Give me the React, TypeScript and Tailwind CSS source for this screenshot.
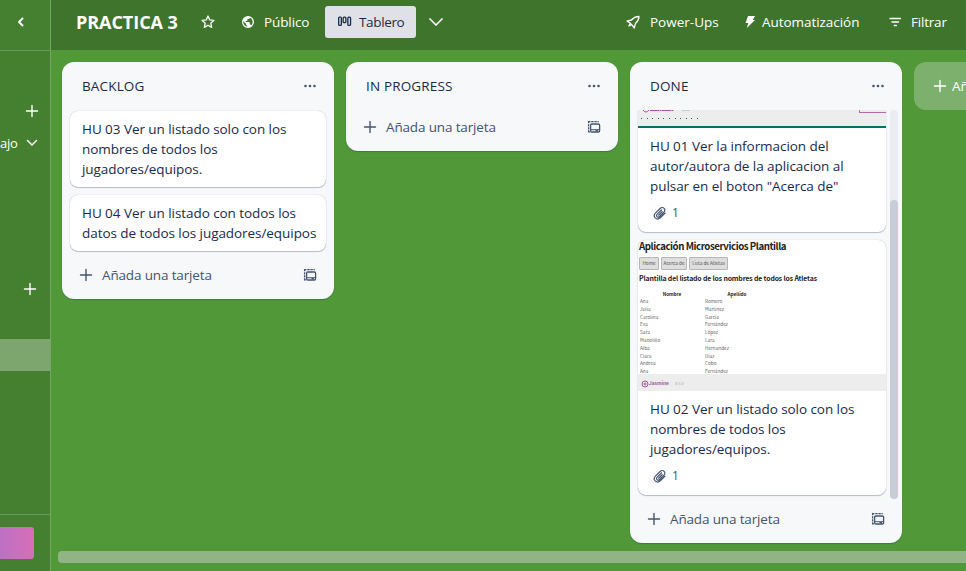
import React from 'react';

type IconProps = { className?: string };

const Plus = ({ className = '' }: IconProps) => (
  <svg width="16" height="16" viewBox="0 0 16 16" className={`shrink-0 ${className}`} fill="none" stroke="currentColor" strokeWidth="1.4" strokeLinecap="round">
    <path d="M8 2.5v11M2.5 8h11" />
  </svg>
);

const Chevron = ({ className = '' }: IconProps) => (
  <svg width="16" height="16" viewBox="0 0 16 16" className={`shrink-0 ${className}`} fill="none" stroke="currentColor" strokeWidth="1.7" strokeLinecap="round" strokeLinejoin="round">
    <path d="M2 5l6 6 6-6" />
  </svg>
);

const Star = () => (
  <svg width="16" height="16" viewBox="0 0 16 16" className="shrink-0" fill="none" stroke="currentColor" strokeWidth="1.3" strokeLinejoin="round">
    <path d="M8 2l1.75 3.9 4.25.45-3.2 2.85.9 4.2L8 11.2l-3.7 2.2.9-4.2L2 6.35l4.25-.45z" />
  </svg>
);

const Globe = () => (
  <svg width="16" height="16" viewBox="0 0 16 16" className="shrink-0" fill="currentColor">
    <path fillRule="evenodd" d="M8 2a6 6 0 1 0 0 12A6 6 0 0 0 8 2zM7.300 12.750A4.800 4.800 0 0 1 3.300 7.100L6.100 9.900v.6c0 .7.5 1.200 1.200 1.200zM11.500 11.200c-.2-.5-.6-.8-1.200-.8h-.5V8.700c0-.4-.3-.6-.6-.6H5.700V6.900h1.100c.4 0 .6-.3.600-.6V5.100h1.200c.6 0 1.100-.5 1.100-1.100v-.4a4.800 4.800 0 0 1 1.800 7.600z" />
  </svg>
);

const BoardIcon = () => (
  <svg width="16" height="16" viewBox="0 0 16 16" className="shrink-0" fill="none" stroke="currentColor" strokeWidth="1.3">
    <rect x="1.650" y="3.150" width="2.700" height="8.200" rx="0.9" />
    <rect x="6.150" y="3.150" width="2.700" height="5.500" rx="0.9" />
    <rect x="10.850" y="3.150" width="2.700" height="8.200" rx="0.9" />
  </svg>
);

const Rocket = () => (
  <svg width="16" height="16" viewBox="0 0 16 16" className="shrink-0" fill="none" stroke="currentColor" strokeWidth="1.3" strokeLinejoin="round" strokeLinecap="round">
    <path d="M14 2.300C10.500 2.500 8.500 3.600 6.400 6L2 7.100l2.800 1.700 2.800 2.800L9.300 14l1-4.200C12.700 7.700 13.800 5.700 14 2.300z" />
    <path d="M4.800 10.100L3.900 12l2-.9" />
  </svg>
);

const Bolt = () => (
  <svg width="16" height="16" viewBox="0 0 16 16" className="shrink-0" fill="currentColor">
    <path d="M6 2h7l-2.200 4H13L4.800 14l1.500-5H3.500z" />
  </svg>
);

const FilterIcon = () => (
  <svg width="16" height="16" viewBox="0 0 16 16" className="shrink-0" fill="none" stroke="currentColor" strokeWidth="1.4" strokeLinecap="round">
    <path d="M3 4.500h10.500M5 8h6.500M7.300 11.500h2" />
  </svg>
);

const Dots = () => (
  <svg width="16" height="16" viewBox="0 0 16 16" className="shrink-0 text-[#44546f]" fill="currentColor">
    <circle cx="3.500" cy="8" r="1.300" />
    <circle cx="8" cy="8" r="1.300" />
    <circle cx="12.500" cy="8" r="1.300" />
  </svg>
);

const TemplateIcon = () => (
  <svg width="16" height="16" viewBox="0 0 16 16" className="shrink-0 text-[#44546f]" fill="none" stroke="currentColor" strokeWidth="1.300">
    <rect x="4.600" y="5" width="9" height="8" rx="1.200" />
    <path d="M5 10.700h8.500" strokeWidth="1" />
    <path d="M9.500 11.700h2.500" strokeWidth="1.300" />
    <path d="M2.600 4.300V2.700h1.800M5.200 2.700h2.400M8.400 2.700h2.400M11.500 2.700h1.300" />
    <path d="M2.600 5.200v2.300M2.600 8.300v2.300M2.600 11.300v1.500h1.300" />
  </svg>
);

const Clip = () => (
  <svg width="16" height="16" viewBox="0 0 16 16" className="shrink-0 text-[#44546f]" fill="none" stroke="currentColor" strokeWidth="1.200" strokeLinecap="round" strokeLinejoin="round">
    <path d="M12.900 8.200l-4.700 4.600c-1.500 1.400-3.700 1.400-5 .1-1.300-1.400-1.200-3.300.2-4.700l4.700-4.700c1.200-1.200 3-1.200 4-.2 1.100 1.100 1 2.700-.1 3.800L7.600 11.500c-.8.800-1.900.8-2.600.200-.7-.8-.6-1.700.2-2.500l4.300-4.200" />
    <path d="M6.600 10.200l3.600-3.500" />
  </svg>
);

const List = ({ title, children }: { title: string; children?: React.ReactNode }) => (
  <section className="flex w-[272px] shrink-0 flex-col rounded-xl bg-[#f7f8fa] pb-2 shadow-[0_1px_1px_#091e4240]">
    <header className="flex h-12 items-center justify-between pl-5 pr-4">
      <h2 className="pt-0.5 text-[13.5px] font-medium tracking-[0.15px]">{title}</h2>
      <Dots />
    </header>
    {children}
    <footer className="flex h-8 items-center px-4 text-[#44546f]">
      <Plus />
      <span className="ml-2 flex-1 pt-0.5 text-[13.5px] tracking-[-0.15px]">Añada una tarjeta</span>
      <TemplateIcon />
    </footer>
  </section>
);

const Card = ({ lines, cover, attachments }: { lines: string[]; cover?: React.ReactNode; attachments?: number }) => (
  <article className="shrink-0 overflow-hidden rounded-lg bg-white shadow-[0_1px_1px_#091e4240,0_0_1px_#091e424f]">
    {cover}
    <div className={attachments ? 'px-3 pb-1 pt-2' : 'px-3 py-2'}>
      {lines.map((line) => (
        <p key={line} className="h-5 whitespace-nowrap text-[13.5px] leading-5 tracking-[-0.06px]">{line}</p>
      ))}
      {attachments && (
        <div className="mt-1 flex h-7 items-center gap-1 pb-[3px] pl-0.5 text-xs text-[#44546f]">
          <Clip />
          <span>{attachments}</span>
        </div>
      )}
    </div>
  </article>
);

const Jasmine = () => (
  <div className="flex h-[17px] items-center bg-[#ededed] pl-[3px] pt-0.5 text-[4.800px] font-bold text-[#a0569a]">
    <svg width="8" height="8" viewBox="0 0 8 8" fill="none" stroke="currentColor">
      <circle cx="4" cy="4" r="3" />
      <circle cx="4" cy="4" r="1" />
    </svg>
    <span>Jasmine</span>
    <span className="ml-1.5 text-[4px] font-normal text-[#aaa]">4.5.0</span>
  </div>
);

const ReportCover = () => (
  <div className="flex h-[18px] flex-col justify-between border-b-2 border-[#007069] bg-[#ededed]">
    <div className="flex h-[3px] justify-between overflow-hidden pl-1 text-[#a0569a]">
      <div className="flex">
        <svg width="32" height="3" viewBox="0 0 32 3" fill="none" stroke="currentColor">
          <path d="M1 0q3 4 6 0M8 .5h24" strokeDasharray="9 .5 2 .5" />
        </svg>
        <div className="ml-2 h-px w-2 bg-[#ccc]" />
      </div>
      <div className="h-[3px] w-[27px] border-b border-l border-[#b06aaa]" />
    </div>
    <div className="mb-[7px] flex gap-[4.600px] pl-[3px]">
      {Array.from({ length: 11 }, (_, i) => (
        <i key={i} className="h-px w-px bg-[#007069]" />
      ))}
    </div>
  </div>
);

const athletes = [
  ['Ana', 'Romero'], ['Julia', 'Martinez'], ['Carolina', 'García'], ['Eva', 'Fernández'], ['Sara', 'López'],
  ['Manolillo', 'Lara'], ['Alba', 'Hernandez'], ['Clara', 'Díaz'], ['Andrea', 'Cobo'], ['Ana', 'Fernández'],
];

const AthletesCover = () => (
  <div className="h-[151px] overflow-hidden font-['Noto_Sans_CJK_SC','Noto_Sans',sans-serif] text-[#222]">
    <div className="h-[134px] overflow-hidden pl-px">
      <div className="h-[17px] whitespace-nowrap text-[9.700px] font-bold leading-[13px] tracking-[-0.45px]">Aplicación Microservicios Plantilla</div>
      <div className="flex h-[13px] gap-[2px] whitespace-nowrap text-center text-[4.700px] leading-[11px] text-[#555]">
        <span className="w-5 rounded-[1px] border border-[#b5b5b5] bg-[#dedede]">Home</span>
        <span className="w-[26px] rounded-[1px] border border-[#b5b5b5] bg-[#dedede]">Acerca de</span>
        <span className="w-[39px] rounded-[1px] border border-[#b5b5b5] bg-[#dedede]">Lista de Atletas</span>
      </div>
      <div className="h-5 whitespace-nowrap text-[6.900px] font-bold leading-[17px] tracking-[-0.14px]">Plantilla del listado de los nombres de todos los Atletas</div>
      <div className="grid h-2 grid-cols-[66px_64px] text-center text-[4.700px] font-bold leading-2">
        <span>Nombre</span>
        <span>Apellido</span>
      </div>
      {athletes.map(([name, surname], i) => (
        <div key={i} className="grid h-[7.800px] grid-cols-[65px_64px] pl-px text-[4.700px] leading-[7.800px] text-[#666]">
          <span>{name}</span>
          <span>{surname}</span>
        </div>
      ))}
    </div>
    <Jasmine />
  </div>
);

export default function App() {
  return (
    <div className="flex h-[571px] w-[966px] overflow-hidden bg-[#519839] font-['Open_Sans',sans-serif] text-sm text-[#172b4d]">
      <aside className="flex w-[51px] shrink-0 flex-col border-r border-[#74a664] bg-[#457f30] text-white">
        <div className="flex h-[51px] items-center border-b border-[#6a9859] pb-1.5 pl-3">
          <svg width="16" height="16" viewBox="0 0 16 16" fill="none" stroke="currentColor" strokeWidth="2" strokeLinecap="round" strokeLinejoin="round">
            <path d="M10.500 4.500L7 8l3.500 3.500" />
          </svg>
        </div>
        <div className="mt-[52px] flex h-4 justify-end pr-2.5"><Plus /></div>
        <div className="mt-[14px] flex h-5 items-center justify-between pr-2.5">
          <span className="text-[13px] font-medium tracking-[-0.2px]">ajo</span>
          <svg width="16" height="16" viewBox="0 0 16 16" className="shrink-0" fill="none" stroke="currentColor" strokeWidth="1.500" strokeLinecap="round" strokeLinejoin="round">
            <path d="M3.500 5.500L8 10l4.500-4.500" />
          </svg>
        </div>
        <div className="mt-32 flex h-4 justify-end pr-3"><Plus /></div>
        <div className="mt-[42px] h-8 bg-[#7da66f]" />
        <div className="mt-auto h-[57px] border-t border-[#6a9859] pt-3">
          <div className="h-8 w-[34px] rounded-r-[3px] bg-gradient-to-r from-[#bd70c4] to-[#d76eb8]" />
        </div>
      </aside>

      <main className="flex w-[915px] shrink-0 flex-col">
        <nav className="flex h-[50px] shrink-0 items-center bg-[#3f742c] pb-1.5 pl-[25px] text-[13.5px] font-medium text-white">
          <h1 className="w-[124px] whitespace-nowrap pt-0.5 text-[18px] font-bold tracking-[-0.050px]">PRACTICA 3</h1>
          <Star />
          <div className="ml-6 flex w-[85px] items-center gap-2"><Globe /><span className="pt-0.5 tracking-[-0.1px]">Público</span></div>
          <button className="flex h-8 w-[91px] items-center gap-1.5 rounded-[3px] bg-[#dfe1e6] pl-3 font-normal text-[#172b4d]">
            <BoardIcon />
            <span className="pt-0.5 tracking-[-0.350px]">Tablero</span>
          </button>
          <Chevron className="ml-3" />
          <div className="ml-auto flex w-[117px] items-center gap-[9px]"><Rocket /><span className="pt-0.5">Power-Ups</span></div>
          <div className="flex w-[145px] items-center gap-1"><Bolt /><span className="pt-0.5 tracking-[-0.050px]">Automatización</span></div>
          <div className="flex w-[79px] items-center gap-2"><FilterIcon /><span className="pt-0.5 tracking-[-0.2px]">Filtrar</span></div>
        </nav>

        <div className="flex h-[501px] shrink-0 items-start gap-3 overflow-hidden pl-[11px] pt-3">
          <List title="BACKLOG">
            <div className="flex flex-col gap-2 px-2 pb-2 pt-px">
              <Card lines={['HU 03 Ver un listado solo con los', 'nombres de todos los', 'jugadores/equipos.']} />
              <Card lines={['HU 04 Ver un listado con todos los', 'datos de todos los jugadores/equipos']} />
            </div>
          </List>
          <List title="IN PROGRESS"><div className="h-px" /></List>
          <List title="DONE">
            <div className="mb-1 flex h-[389px] justify-between overflow-hidden pl-2 pr-1">
              <div className="-mt-3 flex w-[248px] flex-col gap-2 pb-1">
                <Card
                  cover={<div className="bg-[#ededed] pt-3"><ReportCover /></div>}
                  lines={['HU 01 Ver la informacion del', 'autor/autora de la aplicacion al', 'pulsar en el boton "Acerca de"']}
                  attachments={1}
                />
                <Card
                  cover={<AthletesCover />}
                  lines={['HU 02 Ver un listado solo con los', 'nombres de todos los', 'jugadores/equipos.']}
                  attachments={1}
                />
              </div>
              <div className="h-full w-2 rounded bg-[#ebecf0] pt-[90px]">
                <div className="h-[299px] rounded bg-[#c9cdd7]" />
              </div>
            </div>
          </List>
          <div className="flex h-12 w-[272px] shrink-0 items-center gap-1 rounded-xl bg-[#7db06c] pl-[18px] font-medium text-white">
            <Plus />
            <span className="whitespace-nowrap pt-0.5 text-[13.5px]">Añada otra lista</span>
          </div>
        </div>
        <div className="ml-[7px] h-3 shrink-0 rounded-l bg-[#91b484]" />
      </main>
    </div>
  );
}
